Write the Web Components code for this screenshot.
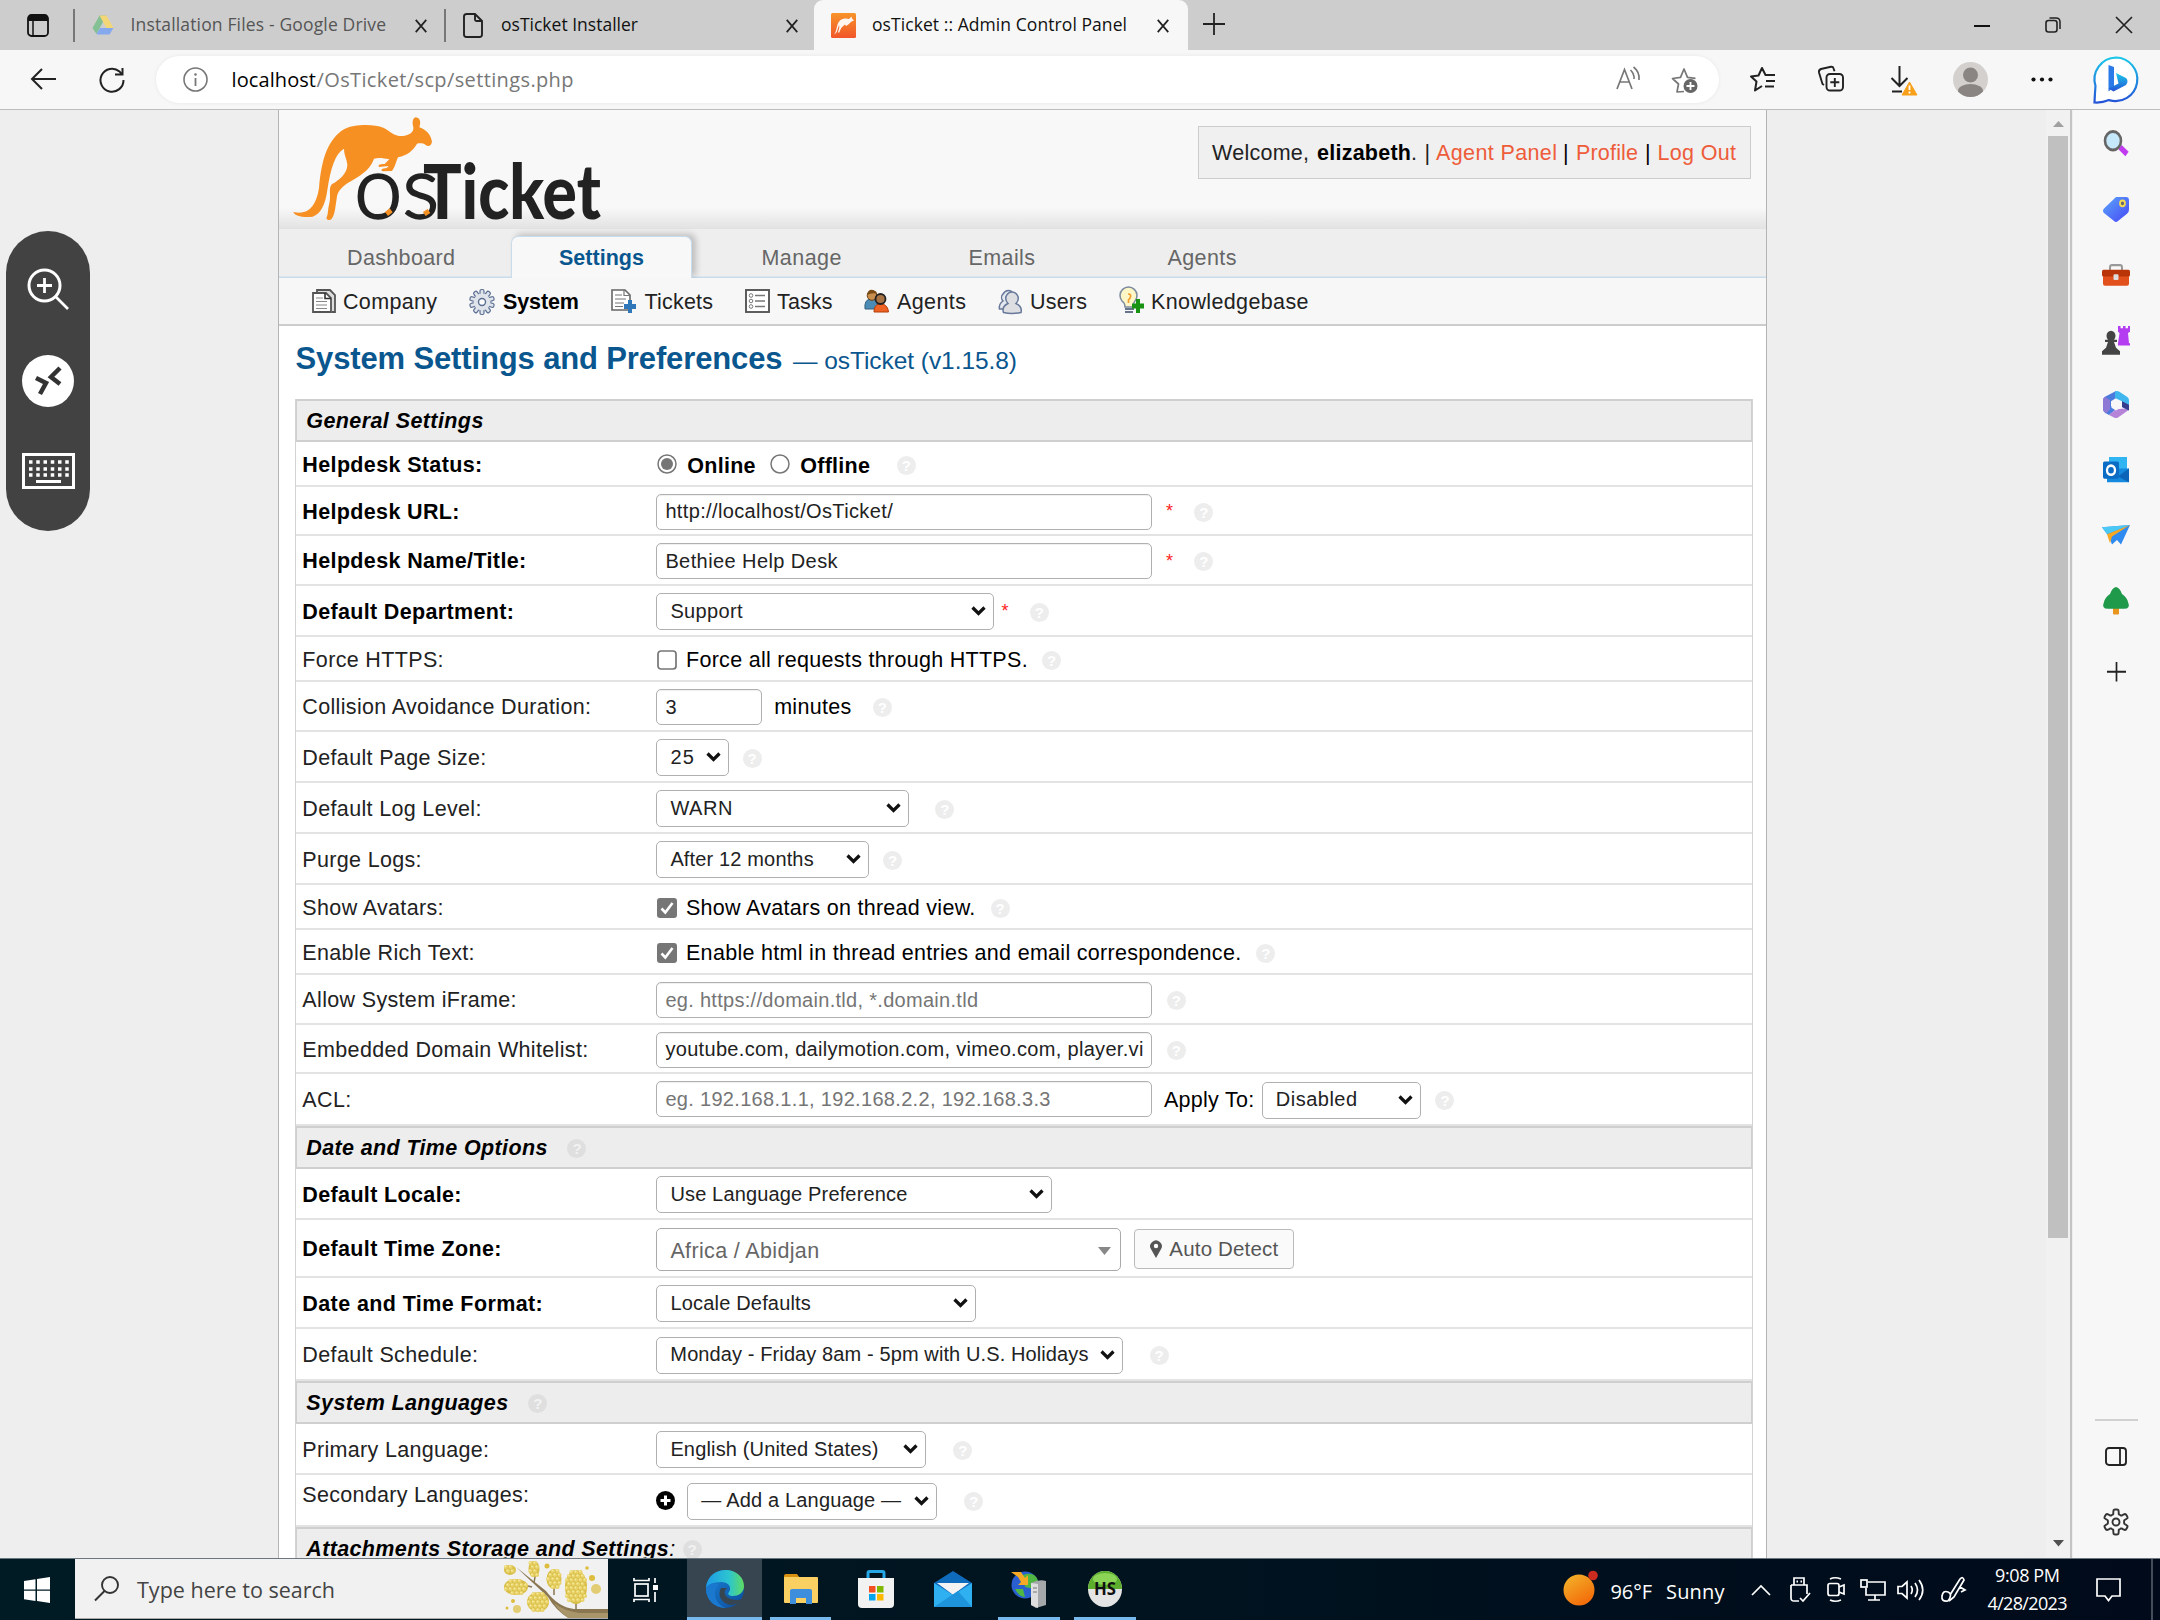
<!DOCTYPE html>
<html lang="en"><head><meta charset="utf-8"><title>osTicket :: Admin Control Panel</title>
<style>html,body{margin:0;padding:0;width:2160px;height:1620px;overflow:hidden;background:#eee}</style></head>
<body><desktop-screen></desktop-screen>
<script>
// Table geometry is written in design units; U converts them to CSS pixels.
const U = 1.37755;

// Builds a horizontal run of flex items; each entry is [start, end, html, dy].
const flow = (start, items, s = 1) => {
  let p = start;
  return items.map(([a, b, html, dy = 0]) => {
    const m = a * s - p, w = (b - a) * s; p = b * s;
    return `<div style="flex:none;display:flex;justify-content:center;margin-left:${m.toFixed(2)}px;width:${w.toFixed(2)}px;${dy ? `margin-top:${dy * 2}px` : ''}">${html}</div>`;
  }).join('');
};
const T = (w, text, style = '') => `<fit-text w="${w.toFixed(2)}" style="${style}">${text}</fit-text>`;
// Text item for flow()
const tx = (a, b, text, style = '', dy = 0, s = 1) => [a, b, T((b - a) * s, text, style), dy];
const svg = (w, h, vb, body, extra = '') => `<svg width="${w}" height="${h}" viewBox="${vb}" fill="none" style="display:block;flex:none;overflow:visible" ${extra}>${body}</svg>`;
const ico = (cx, w, h, body, dy = 0, vb) => [cx - w / 2, cx + w / 2, svg(w, h, vb || `0 0 ${w} ${h}`, body), dy];

const make = (name, css, html) => customElements.define(name, class extends HTMLElement {
  constructor() { super(); this.attachShadow({ mode: 'open' }); }
  connectedCallback() {
    this.shadowRoot.innerHTML = `<style>*{box-sizing:border-box}:host{display:flex;box-sizing:border-box;align-items:center}${css}</style>` + (typeof html === 'function' ? html(this) : html);
  }
});

make('desktop-screen', `:host{flex-direction:column;align-items:stretch;width:2160px;height:1620px;font-family:"Liberation Sans",Arial,sans-serif;color:#000;position:relative}
 .mid{display:flex;height:1448px;flex:none}
 remote-bar{position:absolute;left:6px;top:231px}`,
 `<tab-strip></tab-strip><tool-bar></tool-bar><div class="mid"><page-view></page-view><edge-sidebar></edge-sidebar></div><task-bar></task-bar><remote-bar></remote-bar>`);

const X = '<path d="M1 1L13 15M13 1L1 15" stroke="#222" stroke-width="2"/>';
make('tab-strip', `:host{height:50px;background:#cdcdcd;font-family:"Open Sans",sans-serif;font-size:17.5px;color:#111}
 .d{width:1.5px;height:33px;background:#777}
 .tab{flex:none;margin-left:20px;width:374px;height:50px;background:#f7f7f7;border-radius:9px 9px 0 0;display:flex;align-items:center}
 .rest{display:flex;align-items:center}`,
 flow(0, [
  ico(37.5, 22, 23, '<rect x="1" y="1" width="20" height="21" rx="3.5" stroke="#111" stroke-width="1.8"/><path d="M1 7V4q0-3 3-3h14q3 0 3 3v3z" fill="#111"/><path d="M6 7v15" stroke="#111" stroke-width="1.5"/>'),
  [73, 74.5, '<div class="d"></div>'],
  ico(102.5, 22, 20, '<path d="M7.5 0.5h7L11 7 4.5 19 0.5 13z" fill="#83c093"/><path d="M7.5 0.5h7L21.5 13h-7z" fill="#f3d675"/><path d="M4.5 19l3.5-6h13.5l-4 6.5h-12z" fill="#86a9ee"/>'),
  tx(130.500, 386, 'Installation Files - Google Drive', 'color:#555', -1),
  ico(421, 14, 14, X, 1, '0 0 14 16'),
  [444, 445.5, '<div class="d"></div>'],
  ico(473, 20, 25, '<path d="M3 1h9l7 7v13.500q0 2.500-2.500 2.500H3.500q-2.500 0-2.500-2.500V3.500Q1 1 3.500 1zM12 1v5.500q0 1.500 1.500 1.500H19" stroke="#222" stroke-width="1.9"/>'),
  tx(501, 638, 'osTicket Installer', '', -1),
  ico(792, 14, 14, X, 1, '0 0 14 16')]) +
 `<div class="tab" style="margin-left:15px">` + flow(814, [
  ico(843.5, 25, 25, '<defs><linearGradient id="f" x2="0" y2="1"><stop stop-color="#f79429"/><stop offset="1" stop-color="#f1562a"/></linearGradient></defs><rect width="25" height="25" rx="1.500" fill="url(#f)"/><path d="M3 21.500C6 19 5 11 9 7.500c3-2.500 7-2 9-1.500l2.500-2.500.5 2 2 2-2.500 1c-2 1.500-3 3.500-5.500 4.500l-1-1.500c-2 2-4 3-4.500 5l-1.500 3.500-1-1c1.500-4 1.500-5 1-7-1.500 4-1.500 8-5 9.500z" fill="#fff" fill-opacity=".93"/>'),
  tx(872, 1127, 'osTicket :: Admin Control Panel', '', -1),
  ico(1163, 14, 14, X, 1, '0 0 14 16')]) + '</div>' +
 `<div class="rest">` + flow(1188, [
  ico(1214, 22, 22, '<path d="M11 0v22M0 11h22" stroke="#222" stroke-width="1.8"/>', -1),
  ico(1981.500, 16, 4, '<path d="M0 2h16" stroke="#111" stroke-width="2"/>', 1),
  ico(2052.500, 16, 16, '<rect x="1" y="3.500" width="11" height="11.500" rx="2.500" stroke="#222" stroke-width="1.6"/><path d="M4.500 1H11q4 0 4 4v7" stroke="#222" stroke-width="1.5"/>'),
  ico(2124, 16, 16, '<path d="M0 0L16 16M16 0L0 16" stroke="#222" stroke-width="1.7"/>')]) + '</div>');

const person = '<clipPath id="pc"><circle cx="17.500" cy="17.500" r="17.500"/></clipPath><g clip-path="url(#pc)"><rect width="35" height="35" fill="#d3d0cd"/><circle cx="17.500" cy="13" r="7.500" fill="#8a8582"/><ellipse cx="17.500" cy="29" rx="12.500" ry="7" fill="#8a8582"/></g>';
make('tool-bar', `:host{height:60px;background:#f7f7f7;border-bottom:1.5px solid #bdbdbd;font-family:"Open Sans",sans-serif;font-size:20px}
 .pill{flex:none;width:1563px;height:47px;border-radius:24px;background:#fff;margin-left:29px;display:flex;align-items:center;box-shadow:0 0 4px #0001}`,
 flow(0, [
  ico(43, 25, 22, '<path d="M1 11h24M11 1L1 11l10 10" stroke="#222" stroke-width="2"/>', -1),
  ico(112, 26, 26, '<path d="M24.500 13A11.500 11.500 0 1 1 20.500 4.500l2 2.500M23.500 1v6.500H16" stroke="#222" stroke-width="2"/>')]) +
 `<div class="pill" style="margin-left:31px">` + flow(156, [
  ico(195.500, 25, 25, '<circle cx="12.500" cy="12.500" r="11.500" stroke="#777" stroke-width="1.600"/><path d="M12.500 11v8" stroke="#777" stroke-width="1.800"/><circle cx="12.500" cy="7.500" r="1.300" fill="#777"/>'),
  tx(231.500, 316, 'localhost'),
  tx(316.500, 573.500, '/OsTicket/scp/settings.php', 'color:#777'),
  ico(1628, 24, 22, '<path d="M1 22L8.500 2.500 16 22M4 15h9" stroke="#777" stroke-width="1.700"/><path d="M14.500 3q4 4 3.500 9M17.500 0q6.500 5 5.500 13" stroke="#777" stroke-width="1.600"/>', -1.500),
  ico(1684, 26, 26, '<path d="M13 24.500l-7 .5 1.500-8-6-5.500 8-1.200L13 2l3.500 8.300 8 1" stroke="#777" stroke-width="1.700" stroke-linejoin="round"/><circle cx="19.500" cy="19" r="7" fill="#666"/><path d="M19.500 15v8M15.500 19h8" stroke="#fff" stroke-width="1.800"/>')]) + '</div>' +
 flow(1719, [
  ico(1763, 26, 26, '<path d="M12 20l-7 4.500 1.500-9L1 10.500l7.500-1L12 2l3.500 7H25M16 15h9M15 20.500h9" stroke="#222" stroke-width="2" stroke-linejoin="round"/>', -1),
  ico(1831, 26, 26, '<rect x="8.500" y="8" width="16.500" height="16.500" rx="3.500" stroke="#222" stroke-width="1.900"/><path d="M16.800 12v9M12.300 16.300h9M6 19l-1.500-1L1 6.500q-.5-2.500 2-3.500L13 .8q2-.3 2.500 1.500l1 3" stroke="#222" stroke-width="1.900"/>', -1),
  ico(1902.500, 28, 30, '<path d="M10.500 0v19M2.500 12l8 8 8-8M3 25.500h10" stroke="#222" stroke-width="2"/><path d="M20.500 16l7.500 13H13z" fill="#f9a01b" stroke="#f9a01b" stroke-width="1"/><path d="M20.500 19.500v4.500M20.500 25.500v2" stroke="#fff" stroke-width="1.800"/>', 1),
  ico(1970.500, 35, 35, person, -.5),
  ico(2042, 22, 5, '<circle cx="2.500" cy="2.500" r="2.100" fill="#111"/><circle cx="11" cy="2.500" r="2.100" fill="#111"/><circle cx="19.500" cy="2.500" r="2.100" fill="#111"/>'),
  ico(2116, 46, 48, '<defs><linearGradient id="b" x2="0" y2="1"><stop stop-color="#1cc8e8"/><stop offset="1" stop-color="#2553d8"/></linearGradient></defs><path d="M23 1.500a21.800 21.800 0 1 1-7 42.600Q9 47 1.500 46.500 2 36 2.500 30A22 22 0 0 1 23 1.500z" fill="#fff" stroke="url(#b)" stroke-width="2.200"/><path d="M15.500 9l5.500 2v20l-5.500 4.500z" fill="#2a7be8"/><path d="M23 17l10 5q3 3 0 7l-12.500 6.500-5-3 10-5z" fill="url(#b)"/>')]));

// --- osTicket page ---
const logo = svg(311.3, 105.3, '66 34 934 316', `
 <path d="M70 322C112 332 138 308 147 250C154 160 176 102 222 74C252 58 312 58 340 69C362 80 372 96 400 94C420 91 432 82 430 68C425 50 430 38 438 38C450 40 454 52 448 68C470 76 484 92 486 112C484 122 476 128 467 121C458 114 448 116 441 117C431 136 412 152 384 158C378 170 376 186 366 199L338 200C330 196 336 191 350 190L356 184L328 187C322 182 328 178 344 178L358 164C340 160 324 158 312 162C298 200 268 214 232 236C212 250 202 262 200 282C196 304 196 328 184 344C178 348 170 346 169 340C176 326 172 318 178 296C184 272 174 250 186 238C206 228 232 206 232 180C230 160 222 152 222 132C196 146 182 190 172 256C166 300 152 328 128 336C100 340 74 334 70 322Z" fill="#f79023"/>
 <g fill="#222" font-family="Lato"><text x="253" y="341" font-weight="300" font-size="262" stroke="#222" stroke-width="7" textLength="254" lengthAdjust="spacingAndGlyphs">os</text>
 <text x="459" y="342" font-weight="900" font-size="228" textLength="534" lengthAdjust="spacingAndGlyphs">Ticket</text></g>
 <path d="M345 322l14-11 9 12-14 11zM459 322l14-9 8 12-14 9z" fill="#f79023"/>`);

const doc = (x = 0) => `<path d="M${x + 1} 4h13l5 5v14H${x + 1}z" fill="#fff" stroke="#555" stroke-width="1.800"/><path d="M${x + 13} 4v5.500h6" stroke="#333" stroke-width="1.600"/><path d="M${x + 4} 9h7M${x + 4} 12.500h11M${x + 4} 16h11M${x + 4} 19.500h11" stroke="#888" stroke-width="1.200"/>`;
let gearTeeth = ''; for (let i = 0; i < 10; i++) gearTeeth += `<rect x="11" y="0.500" width="4" height="6" rx="1.500" fill="#dfe3ea" stroke="#5b6f93" stroke-width="1.200" transform="rotate(${i * 36} 13 13)"/>`;
const subIcons = {
 company: '<path d="M5 3V1h13l5 5v17h-3" fill="#ddd" stroke="#555" stroke-width="1.800"/>' + doc(),
 gear: gearTeeth + '<circle cx="13" cy="13" r="8.500" fill="#dfe3ea"/><circle cx="13" cy="13" r="3.500" fill="#fff" stroke="#5b6f93" stroke-width="1.400"/>',
 tickets: '<path d="M1 1h13l5 5v15H1z" fill="#fff" stroke="#666" stroke-width="1.600"/><path d="M13 1v5.500h6M4 6h7M4 10h11M4 14h9M4 17.500h8" stroke="#777" stroke-width="1.200"/><path d="M17 11h4v4h4v5h-4v4h-4v-4h-4v-5h4z" fill="#2f77b8"/>',
 tasks: '<rect x="1" y="1" width="23" height="22" fill="#fff" stroke="#555" stroke-width="1.900"/><circle cx="6" cy="6.500" r="1.800" stroke="#777"/><circle cx="6" cy="12" r="1.800" stroke="#777"/><circle cx="6" cy="17.500" r="1.800" stroke="#777"/><path d="M10 6.500h10M10 12h10M10 17.500h10" stroke="#777" stroke-width="1.500"/>',
 agents: '<path d="M1 20q-1-9 5-10h4q4 1 5 5l-3 5z" fill="#4a8cb5" stroke="#34607e"/><circle cx="8" cy="6.500" r="4.800" fill="#c98f4e" stroke="#6b3e12"/><path d="M3 6q1-6 6-5 4 1 4 4-4-2-10 1z" fill="#7a4a17"/><path d="M10 23q0-7 5-8h4q5 2 5.500 8z" fill="#ee6223" stroke="#b33c0b"/><circle cx="16.500" cy="10" r="5" fill="#a87345" stroke="#222" stroke-width="1.800"/>',
 users: '<path d="M7 20H1.500q-1-5 3.500-8a5 5 0 0 1 0-7q3-5 8-3l4 6z" fill="#e4e8ef" stroke="#67789a" stroke-width="1.500"/><path d="M5.500 23.500q-2-6 4.500-9-3-3-2-7 2-4.500 6-4.500t6 4.500q1 4-2 7 6.500 3 5 9-9 2-17.500 0z" fill="#dcdee2" stroke="#67789a" stroke-width="1.500"/>',
 kb: '<path d="M6 18Q6 14 3 12A8.500 8.500 0 1 1 16 12q-2 2-2 6z" fill="#fdf6c6" stroke="#7c8a9e" stroke-width="1.500"/><path d="M9 5q4 0 2 4l-1.500 2v3" stroke="#f0a030" stroke-width="1.700"/><path d="M6 20h9M6 23h8" stroke="#66758a" stroke-width="2"/><path d="M17 10h4v4.500h4v5h-4V24h-4v-4.500h-4v-5h4z" fill="#199314"/>' };
const si = (cx, k) => ico(cx, 25, 25, subIcons[k], .5);
const su = (a, b, s, style) => tx(a, b, s, style, 1);

make('page-view', `:host{width:2072.5px;height:1448px;background:#eee;align-items:stretch;justify-content:flex-start;overflow:hidden;font-size:21.5px}
 .page{margin-left:278px;width:1489px;flex:none;background:#fff;border:solid #b4b4b4;border-width:0 1px;display:flex;flex-direction:column}
 .hd{height:119px;flex:none;background:linear-gradient(#f8f8f8 82%,#e2e2e2);display:flex;align-items:flex-start}
 .wel{margin:16px 0 0 594px;width:553px;height:53px;border:1.5px solid #ccc;background:#f0f0f0;display:flex;align-items:center}
 .nav{height:49px;flex:none;display:flex;align-items:center;color:#666;background:#eee;box-shadow:inset 0 -1.5px #c8dcec}
 .act{width:181px;height:42px;align-self:flex-end;flex:none;background:#f8f8f8;border:1.5px solid #c8dcec;border-bottom:0;border-radius:7px 7px 0 0;box-shadow:4px -2px 6px #0003;clip-path:inset(-10px -12px 0 -4px);display:flex;align-items:center}
 .sub{height:48px;flex:none;background:#f7f7f7;border-bottom:2px solid #ccc;display:flex;align-items:center;color:#222}
 .title{height:73px;flex:none;display:flex;align-items:center;color:#0a568e}
 .ct{margin:0 0 0 16px}`,
 `<div class="page"><div class="hd"><div style="margin:6px 0 0 13px;width:312px">${logo}</div><div class="wel">` +
 flow(1199, [tx(1212, 1309, 'Welcome,', 'color:#222', .5), tx(1317, 1411, 'elizabeth', 'font-weight:bold', .5), tx(1411, 1430, '. |', 'color:#222', .5), tx(1436, 1557, 'Agent Panel', 'color:#ee5c3a', .5), tx(1563, 1569, '|', '', .5), tx(1576, 1638, 'Profile', 'color:#ee5c3a', .5), tx(1645, 1651, '|', '', .5), tx(1657.500, 1736, 'Log Out', 'color:#ee5c3a', .5)]) +
 `</div></div><div class="nav">` + flow(279, [tx(347, 455, 'Dashboard', '', 4.500)]) +
 `<div class="act" style="margin-left:56px">` + flow(512, [tx(559, 644, 'Settings', 'font-weight:bold;color:#0a568e', .5)]) + '</div>' +
 flow(692, [tx(761.500, 841.500, 'Manage', '', 4.500), tx(968.500, 1035, 'Emails', '', 4.500), tx(1167.500, 1236.500, 'Agents', '', 4.500)]) +
 `</div><div class="sub">` + flow(279, [
  si(324.500, 'company'), su(343, 437, 'Company'), si(481, 'gear'), su(503, 579, 'System', 'font-weight:bold;color:#000'), si(623.500, 'tickets'), su(644.500, 713, 'Tickets'),
  si(757, 'tasks'), su(777, 832.500, 'Tasks'), si(876.500, 'agents'), su(897, 966, 'Agents'), si(1010, 'users'), su(1030, 1087, 'Users'), si(1131, 'kb'), su(1151, 1308.500, 'Knowledgebase')]) +
 `</div><div class="title">` + flow(279.500, [tx(296, 783, 'System Settings and Preferences', 'font-weight:bold;font-size:31px', -3.500), tx(793.500, 1017.500, '— osTicket (v1.15.8)', 'font-size:24.500px', -2)]) +
 `</div><settings-table class="ct"></settings-table></div><scroll-bar></scroll-bar>`);

make('scroll-bar', `:host{flex-direction:column;width:26px;height:1448px;margin-left:279px;background:#f1f1f1;border-right:2px solid #c4c4c4;flex:none;padding:10px 0 0}
 .th{width:20px;height:1102px;background:#c0c0c0;margin:9px 0 302px;flex:none}`,
 svg(11, 7, '0 0 11 7', '<path d="M0 7L5.500 1 11 7z" fill="#a0a0a0"/>') + '<div class="th"></div>' + svg(11, 7, '0 0 11 7', '<path d="M0 0h11L5.500 6.500z" fill="#505050"/>'));

make('help-tip', `:host{width:19px;height:19px;border-radius:50%;background:var(--tip,#ededed);color:var(--mark,#fff);justify-content:center;font-weight:bold;font-size:15px;font-style:normal;line-height:19px}`, '?');
make('text-box', `:host{width:100%;height:36px;background:#fff;border:1.5px solid #b0b0b0;border-radius:5px;padding:0 0 0 8px;font-size:20px;color:#222;box-shadow:inset 0 1px 1px #0001}`, '<slot></slot>');
make('select-box', `:host{width:100%;height:37px;background:#fff;border:1.5px solid #b0b0b0;border-radius:5px;padding:0 7px 1px 13px;font-size:20px;color:#222;justify-content:space-between}`, '<slot></slot>' + svg(15, 10, '0 0 15 10', '<path d="M1.500 1.500l6 6 6-6" stroke="#111" stroke-width="3.200"/>', ''));
make('choice-box', `:host{width:20px;height:20px;justify-content:center}`, e => {
  const k = e.getAttribute('kind');
  return svg(20, 20, '0 0 20 20', k === 'on' ? '<circle cx="10" cy="10" r="9" stroke="#767676" stroke-width="1.500" fill="#fff"/><circle cx="10" cy="10" r="6" fill="#767676"/>'
   : k === 'off' ? '<circle cx="10" cy="10" r="9" stroke="#767676" stroke-width="1.500" fill="#fff"/>'
   : k === 'empty' ? '<rect x="1" y="1" width="18" height="18" rx="3" stroke="#767676" stroke-width="1.700" fill="#fff"/>'
   : '<rect width="20" height="20" rx="3" fill="#767676"/><path d="M4.500 10.500l3.800 4L15.500 5" stroke="#fff" stroke-width="2.600"/>');
});

const h = (c, dy = .5) => [c - 7, c + 7, '<help-tip></help-tip>', dy];
const inp = (a, b, tb, text, ph) => [a, b, `<text-box>${T((tb - 483) * U, text, ph ? 'color:#757575' : '')}</text-box>`];
const sel = (a, b, ta, tb, text) => [a, b, `<select-box>${T((tb - ta) * U, text)}</select-box>`];
const t = (a, b, s, style, dy = 0) => tx(a, b, s, style, dy + .5, U);
const star = c => [c - 3, c + 3, T(7, '*', 'color:#f22;font-size:18px'), 0];
const ch = (c, k, dy = .5) => [c - 7.25, c + 7.25, `<choice-box kind="${k}"></choice-box>`, dy];
// [height, label, bold, label end, cell items]
const rows = [
 [45, 'Helpdesk Status:', 1, 350, [ch(484, 'on', -1), t(499, 548.500, 'Online', 'font-weight:bold', 1), ch(566.500, 'off', -1), t(581, 631.500, 'Offline', 'font-weight:bold', 1), h(658)]],
 [49, 'Helpdesk URL:', 1, 333.500, [inp(476.500, 836.500, 648, 'http://localhost/OsTicket/'), star(849), h(874)]],
 [50, 'Helpdesk Name/Title:', 1, 382, [inp(476.500, 836.500, 608, 'Bethiee Help Desk'), star(849), h(874)]],
 [51, 'Default Department:', 1, 373, [sel(476.500, 721.500, 486, 538.500, 'Support'), star(729.500), h(754.500)]],
 [45, 'Force HTTPS:', 0, 322, [ch(484, 'empty'), t(498, 746, 'Force all requests through HTTPS.'), h(763.500)]],
 [50, 'Collision Avoidance Duration:', 0, 429, [inp(476.500, 553, 492, '3'), t(562, 618, 'minutes'), h(640.500)]],
 [51, 'Default Page Size:', 0, 353, [sel(476.500, 529, 486, 503, '25'), h(546)]],
 [51, 'Default Log Level:', 0, 349.500, [sel(476.500, 660, 486, 531, 'WARN'), h(686)]],
 [51, 'Purge Logs:', 0, 306, [sel(476.500, 630.500, 486, 590, 'After 12 months'), h(648)]],
 [45, 'Show Avatars:', 0, 322, [ch(484, 'check'), t(498, 708, 'Show Avatars on thread view.'), h(726)]],
 [45, 'Enable Rich Text:', 0, 344.500, [ch(484, 'check'), t(498, 901, 'Enable html in thread entries and email correspondence.'), h(919)]],
 [50, 'Allow System iFrame:', 0, 375, [inp(476.500, 836.500, 710, 'eg. https://domain.tld, *.domain.tld', 1), h(854)]],
 [49, 'Embedded Domain Whitelist:', 0, 427, [inp(476.500, 836.500, 830, 'youtube.com, dailymotion.com, vimeo.com, player.vi'), h(854)]],
 [52, 'ACL:', 0, 255, [[...inp(476.500, 836.500, 762.500, 'eg. 192.168.1.1, 192.168.2.2, 192.168.3.3', 1), -1], t(845, 910.500, 'Apply To:'), sel(916, 1031.500, 925, 984, 'Disabled'), h(1049)]],
 ['Date and Time Options', 397, 43, 418.500],
 [51, 'Default Locale:', 1, 335, [sel(476.500, 763.500, 486, 658, 'Use Language Preference')]],
 [58, 'Default Time Zone:', 1, 364, [[476.500, 814, `<zone-picker>${T(108 * U, 'Africa / Abidjan')}</zone-picker>`], [823.500, 939.500, `<detect-button>${T(79 * U, 'Auto Detect')}</detect-button>`, -.5]]],
 [51, 'Date and Time Format:', 1, 394, [sel(476.500, 708.500, 486, 588, 'Locale Defaults')]],
 [52, 'Default Schedule:', 0, 347, [sel(476.500, 815.500, 486, 789.500, 'Monday - Friday 8am - 5pm with U.S. Holidays'), h(841.500)]],
 ['System Languages', 368.500, 43, 390],
 [51, 'Primary Language:', 0, 355, [sel(476.500, 672.500, 486, 637, 'English (United States)'), h(699)]],
 [52, 'Secondary Languages:', 0, 384, [[476.500, 490, svg(19, 19, '0 0 19 19', '<circle cx="9.500" cy="9.500" r="9.500" fill="#000"/><path d="M9.500 4.500v10M4.500 9.500h10" stroke="#fff" stroke-width="3"/>'), -.5], sel(499, 680.500, 509, 654, '— Add a Language —'), h(707)], -6],
];
make('zone-picker', `:host{width:100%;height:43px;border:1.5px solid #aaa;border-radius:5px;padding:4px 9px 0 13px;color:#666;justify-content:space-between}`, '<slot></slot>' + svg(13, 8, '0 0 13 8', '<path d="M0 0h13L6.500 8z" fill="#888"/>'));
make('detect-button', `:host{width:100%;height:40px;border:1.5px solid #bbb;border-radius:4px;background:#fafafa;padding:0 0 0 15px;color:#555;gap:7px;font-size:20.5px}`, svg(12, 18, '0 0 12 18', '<path d="M6 18L1.200 9.500A5.800 5.800 0 1 1 10.800 9.500z" fill="#555"/><circle cx="6" cy="6" r="2.200" fill="#fff"/>') + '<slot></slot>');
make('section-head', `:host{width:100%;flex:none;background:#ededed;border:2px solid #cfcfcf;padding-top:1px;border-left-width:1px;border-right-width:1px;font-weight:bold;font-style:italic;--tip:#dfdfdf;--mark:#f2f2f2}`, '<slot></slot>');
make('setting-row', `:host{width:100%;flex:none;border-bottom:2px solid #e3e3e3;padding-top:2px}`, '<slot></slot>');
const head = (s, end, hh, tip, tail = '', dy = 0) => `<section-head style="height:${hh}px">${flow(296.500, [t(222, end, s, '', dy)].concat(tail ? [t(end + .5, end + 3.500, tail, 'font-weight:normal', dy)] : [], tip ? [h(tip, dy)] : []), U)}</section-head>`;
make('settings-table', `:host{flex-direction:column;width:1458px;height:1200px;border-left:1.5px solid #d4d4d4;border-right:1.5px solid #d4d4d4;flex:none}`,
 head('General Settings', 350.500, 43) + rows.map(r => typeof r[0] === 'string' ? head(r[0], r[1], r[2], r[3]) :
 `<setting-row style="height:${r[0]}px">${flow(296, [t(219.500, r[3], r[1], (r[2] ? 'font-weight:bold' : 'color:#222'), r[5] || 0), ...r[4]], U)}</setting-row>`).join('') +
 head('Attachments Storage and Settings', 485, 43, 502, ':'));

// --- Edge sidebar: icons are stacked by their centre lines ---
const S = (w, hh, body, gap) => `<div style="flex:none;margin-top:${gap}px">${svg(w, hh, `0 0 ${w} ${hh}`, body)}</div>`;
const stack = (top, items) => {
  let p = top;
  return items.map(([c, w, hh, body, k = 1.148]) => {
    const H = hh * k, m = c - H / 2 - p; p = c + H / 2;
    return `<div style="flex:none;margin-top:${m.toFixed(2)}px">${svg(w, H.toFixed(2), `0 0 ${w} ${hh}`, body, 'preserveAspectRatio="none"')}</div>`;
  }).join('');
};
const cog = (() => { let d = ''; for (let i = 0; i < 96; i++) { const a = i / 96 * Math.PI * 2, r = 10.3 + 2.2 * Math.tanh(3 * Math.cos(6 * a)); d += (i ? 'L' : 'M') + (13 + r * Math.sin(a)).toFixed(1) + ' ' + (13 - r * Math.cos(a)).toFixed(1); } return `<path d="${d}Z" stroke="#333" stroke-width="1.900" stroke-linejoin="round"/><circle cx="13" cy="13" r="3.500" stroke="#333" stroke-width="1.900"/>`; })();
make('edge-sidebar', `:host{width:87.5px;height:1448px;background:#f7f7f7;flex-direction:column;justify-content:flex-start}`,
 stack(110, [
 [143.500, 26, 22, '<path d="M17 14l7 6" stroke="#c13cf0" stroke-width="5"/><circle cx="10" cy="8.500" r="8" fill="#c5e9fb" stroke="#666" stroke-width="2.600"/>'],
 [209.500, 26, 22, '<defs><linearGradient id="tg" x2="1" y2="1"><stop stop-color="#5ba7fb"/><stop offset="1" stop-color="#4747f5"/></linearGradient></defs><path d="M13 0h10q3 0 3 3v8q0 2-2 3.500L15 21q-2 1.500-4 0L1 14q-2-2 0-4z" fill="url(#tg)"/><circle cx="19.500" cy="5.500" r="2.500" stroke="#f6dc50" stroke-width="1.800" fill="#667"/>'],
 [275, 28, 19, '<path d="M8 6V3q0-2 2-2h8q2 0 2 2v3" stroke="#999" stroke-width="2"/><rect x="1" y="9" width="26" height="10" rx="2" fill="#e2511c"/><rect y="5" width="28" height="6" rx="1.500" fill="#b93508"/><rect x="11.500" y="9" width="5" height="5" rx="1" fill="#ddd"/>'],
 [340, 28, 25, '<path d="M16 0h2.500v2H21V0h2.500v2H26V0h2v5l-2 1 1 9h1v2H16v-2l1.500-9-1.500-1z" fill="#b43df2"/><path d="M0 25v-3l4-3 2-5H3v-2h3a4.500 4.500 0 1 1 6 0h3v2h-3l2 5 4 3v3z" fill="#444"/>'],
 [405, 26, 24, '<path d="M13 0L2 5Q0 6 0 8v8q0 2 2 3l4 2 7-5-5-3V9l7-4z" fill="#4b7bdc"/><path d="M0 8q0-2 2-3l5 3v8l-4 3.500q-3-1.500-3-3.500z" fill="#8d78d6"/><path d="M6 21l7-5 12-1v2L15 23q-2 1-4 0z" fill="#b583d8"/><path d="M12 .5q2-1 4 0l8 4.500q2 1 2 3v9l-7-3V9l-7-3z" fill="#3fb7ee"/><path d="M19 9l7 3v5l-7-3z" fill="#383c8c"/><path d="M13 7.500l4.500 2.500v4.500L13 17l-4.500-2.500V10z" fill="#f7f7f7"/>'],
 [470, 26, 22, '<path d="M6 0h18v12H6z" fill="#31b4f2"/><path d="M4 10h22v12H4z" fill="#1489dd"/><path d="M26 10v12L15 17z" fill="#0c64b8"/><rect y="4" width="16" height="15" rx="1.500" fill="#0a6cc4"/><circle cx="8" cy="11.500" r="4" stroke="#fff" stroke-width="2.300"/>'],
 [535, 28, 17, '<path d="M0 2L28 0 19 17l-4-4-5 4-3-7z" fill="#2f8bf0"/><path d="M0 2L28 0 5 8z" fill="#4cc8f6"/><path d="M28 0L5 8l3 8 2-6z" fill="#f6a723"/>'],
 [600.500, 26, 24, '<rect x="10" y="16" width="6" height="8" rx="1" fill="#e8961d"/><path d="M13 0q4 1 6 6 5 3 6 7 3 6-4 6H5q-7 0-4-6 1-4 6-7 2-5 6-6z" fill="#1f9a4b"/>'],
 [671.500, 19, 17, '<path d="M9.500 0v17M0 8.500h19" stroke="#222" stroke-width="1.700"/>'],
 [1420.500, 43, 2, '<path d="M0 1h43" stroke="#c4c4c4" stroke-width="1.500"/>', 1],
 [1457, 22, 19, '<rect x="1" y="1" width="20" height="17" rx="3" stroke="#222" stroke-width="1.900"/><path d="M15 1v17" stroke="#222" stroke-width="1.800"/>', 1],
 [1522, 26, 26, cog, 1]]));

make('remote-bar', `:host{width:84px;height:300px;border-radius:42px;background:#424242;flex-direction:column}`,
 S(44, 44, '<circle cx="18.500" cy="18.500" r="15.500" stroke="#fff" stroke-width="3"/><path d="M30 30l12 12M18.500 11v15M11 18.500h15" stroke="#fff" stroke-width="2.800"/>', 36) +
 S(52, 52, '<circle cx="26" cy="26" r="26" fill="#fff"/><path d="M14 23l10 5-6 11M38 13l-9 9 9 7" stroke="#333" stroke-width="4.500"/>', 44) +
 S(53, 36, '<rect x="1.500" y="1.500" width="50" height="33" stroke="#fff" stroke-width="3"/><path d="M7 9h40M7 16h40M7 22h40" stroke="#fff" stroke-width="3.500" stroke-dasharray="3.500 3.750"/><path d="M14 28.500h25" stroke="#fff" stroke-width="3"/>', 46));

// --- Task bar ---
const dots = (cx, cy, rx, ry) => { let s = `<ellipse cx="${cx}" cy="${cy}" rx="${rx}" ry="${ry}" fill="#d9be48"/>`, j = 0; for (let y = -ry + 2; y < ry; y += 4, j++) for (let x = -rx + 2 + (j % 2) * 2; x < rx; x += 4.5) if ((x / rx) ** 2 + (y / ry) ** 2 < 1) s += `<circle cx="${cx + x}" cy="${cy + y}" r="2.100" fill="#e8d269"/><circle cx="${cx + x - .6}" cy="${cy + y - .6}" r=".9" fill="#f6eb9e"/>`; return s; };
const branch = svg(105, 60, '0 0 105 60', '<path d="M28 28l-12-3M50 36V22M30 24l2-12M72 50V40" stroke="#8a7650" stroke-width="1.500"/><path d="M12 8L42 32Q54 48 70 50L105 50v10H66Q52 52 44 38z" fill="#8a7650"/><path d="M50 44Q60 52 76 54L105 54v6H66Q56 54 50 44z" fill="#a8966a"/>' + dots(6, 11, 6, 5) + dots(30, 10, 5.5, 8) + dots(12, 28, 12, 8) + dots(50, 20, 7.5, 10) + dots(72, 28, 11, 17) + dots(34, 43, 11, 10) + '<g fill="#dcbd3e"><circle cx="43" cy="7" r="2.500"/><circle cx="83" cy="9" r="1.800"/><circle cx="88" cy="19" r="3"/><circle cx="92" cy="30" r="5" opacity=".7"/><circle cx="9" cy="42" r="2"/><circle cx="13" cy="50" r="4" opacity=".7"/><circle cx="3" cy="49" r="1.500"/></g>');
const W = 'stroke="#fff" stroke-width="1.700"';
make('task-bar', `:host{height:62px;flex:none;background:linear-gradient(90deg,#001b24,#00131f 55%,#000a1a);border-top:1px solid #6b7780;font-family:"Open Sans",sans-serif;font-size:20px;color:#fff}
 .search{height:60px;width:533px;flex:none;background:#f1f1f1;border-bottom:1.5px solid #aaa;display:flex;align-items:center;color:#444;align-self:flex-start;overflow:hidden}
 .app{height:61px;flex:none;display:flex;align-items:center;justify-content:center;border-bottom:3.5px solid transparent;padding-top:2px}
 .run{border-color:#76b9ed}.on{background:#36454f}
 .clock{display:flex;flex-direction:column;align-items:center;gap:4px;font-size:18px;line-height:24px}`,
 flow(0, [ico(37, 26, 26, '<path d="M0 4l11.500-1.800v10.300H0zM13 2L26 0v12.500H13zM0 13.800h11.500V24L0 22.200zM13 13.800h13V26l-13-2z" fill="#fff"/>')]) +
 `<div class="search" style="margin-left:25px">` + flow(75, [
  ico(106, 25, 25, '<circle cx="16" cy="9" r="8" stroke="#333" stroke-width="1.900"/><path d="M10.500 15L1 24.500" stroke="#333" stroke-width="1.900"/>'),
  tx(137, 335, 'Type here to search', 'font-size:21.500px', .5), [504, 609, branch]]) + '</div>' +
 flow(608, [ico(645.500, 25, 24, `<rect x="2" y="6" width="13" height="12" ${W}/><path d="M1 0v2.500h15V0M1 24v-2.500h15V24M22 0v5M22 14v10" ${W}/><rect x="20" y="7" width="5" height="5" fill="#fff"/>`)]) +
 [[29, 75, 'run on', svg(38, 38, '0 0 38 38', '<defs><linearGradient id="e1" x2="1" y2="0"><stop stop-color="#1d9be6"/><stop offset=".6" stop-color="#2cc4d0"/><stop offset="1" stop-color="#5fdc62"/></linearGradient><linearGradient id="e2" x2="1" y2="1"><stop stop-color="#1c86d8"/><stop offset="1" stop-color="#0b4a9b"/></linearGradient></defs><circle cx="19" cy="19" r="19" fill="url(#e2)"/><path d="M0 18C1 6 10 0 20 0s18 7 18 16c0 7-6 10-11 10-4 0-6-2-4-4 3-4 0-10-8-10C7 12 2 15 0 18z" fill="url(#e1)"/><path d="M15 18c-4 6 0 16 10 17 5 0 9-3 11-6-5 2-15 1-17-5-1-3 1-5 2-6z" fill="#36454f"/><path d="M13 15C6 20 8 34 20 38 8 38 0 29 0 18c3-5 9-6 13-3z" fill="#1b78cf"/>')],
  [8, 61, 'run', svg(34, 30, '0 0 34 30', '<path d="M0 2q0-2 2-2h11l3 4H0z" fill="#d98f10"/><rect y="3" width="34" height="26" rx="1" fill="#fbd063"/><path d="M6 17q0-2 2-2h18q2 0 2 2v13h-6v-6H12v6H6z" fill="#3d8fde"/>')],
  [14, 61, '', svg(36, 38, '0 0 36 38', '<path d="M10 10V3q0-1.500 1.500-1.500h13Q26 1.500 26 3v7" stroke="#25a6e5" stroke-width="3"/><path d="M0 8h36v26q0 4-4 4H4q-4 0-4-4z" fill="#f2f2f2"/><path d="M11 16h6.500v6.500H11z" fill="#f25022"/><path d="M19 16h6.500v6.500H19z" fill="#7fba00"/><path d="M11 24h6.500v6.500H11z" fill="#00a4ef"/><path d="M19 24h6.500v6.500H19z" fill="#ffb900"/>')],
  [16, 61, '', svg(38, 36, '0 0 38 36', '<path d="M0 12L19 0l19 12v24H0z" fill="#0f6cbd"/><path d="M0 12l19 12 19-12v24H0z" fill="#2fb0f0"/><path d="M3 12h32L20 23q-1 1-2 0z" fill="#f3f3f3"/><path d="M0 36l24-16 14 16z" fill="#1e94dc"/>')],
  [15, 62, 'run', svg(36, 37, '0 0 36 37', '<circle cx="14" cy="14" r="13.500" fill="#2a5fd0"/><path d="M12 4q12-4 15 6l-4 8-9-2zM4 18l8 0 2 8q-6 0-10-8z" fill="#4fb543"/><path d="M20 12q8-4 15-2v24l-10 3-5-3z" fill="#a5a8aa"/><path d="M20 12l7 1v24l-7-3z" fill="#dedede"/><path d="M22 17h4M22 21h4" stroke="#777"/><path d="M0 1h10l4 6 3-3v10H7l3-3L7 6z" fill="#f5a925"/>')],
  [14, 62, 'run', svg(34, 36, '0 0 34 36', '<clipPath id="hc"><ellipse cx="17" cy="18" rx="17" ry="18"/></clipPath><g clip-path="url(#hc)"><rect width="34" height="36" fill="#e4e4e4"/><rect width="34" height="18" fill="#5cae2c"/><ellipse cx="17" cy="8" rx="12" ry="6" fill="#8bd455"/></g><text x="6" y="24" font-family="Open Sans" font-weight="bold" font-size="17.500" textLength="22" lengthAdjust="spacingAndGlyphs" fill="#111">HS</text>')]
 ].map(([m, w, c, s]) => `<div class="app ${c}" style="margin-left:${m}px;width:${w}px">${s}</div>`).join('') +
 flow(1137, [
  ico(1581.500, 36, 36, '<defs><linearGradient id="sn" x2=".6" y2="1"><stop stop-color="#f3b72c"/><stop offset="1" stop-color="#f36c0a"/></linearGradient></defs><circle cx="16" cy="20" r="15.500" fill="url(#sn)"/><circle cx="30" cy="5.500" r="4.800" fill="#cc2b20"/>', -2),
  tx(1611.500, 1653, '96°F', '', 1.500), tx(1667, 1725.500, 'Sunny', '', 1.500),
  ico(1761.500, 18, 10, `<path d="M0 10L9 1l9 9" ${W}/>`),
  ico(1800.500, 20, 25, `<path d="M4 8V1h10v7M1 8h16v9M9 24H4q-3 0-3-3V8" ${W}/><path d="M10 21l3 3 7-8" ${W}/><path d="M6.500 4.500h1.500M10.500 4.500h1.500" stroke="#fff" stroke-width="2"/>`),
  ico(1837, 18, 25, `<rect x="1" y="6.500" width="11" height="12" rx="2" ${W}/><path d="M12 10l5-2v9l-5-2M3 2q5-2.500 11 0M3 23q5 2.500 11 0" ${W}/>`),
  ico(1873.500, 26, 22, `<path d="M8 3h17v13H6V9M15 16v5M8 21h12" ${W}/><rect x="1" y="1" width="6" height="7" ${W}/>`),
  ico(1911, 27, 22, `<path d="M1 7.500h4L10 3v16l-5-4.500H1zM14 7q2.500 4 0 8M18 4q5 7 0 14M22 1q7.500 10 0 20" ${W}/>`),
  ico(1955, 26, 25, `<path d="M7 24Q0 25 1 19t6-4 0 9M9 18L19 2q3-3 4 1L13 20l-5 4M19 10l5 3-4 2" ${W}/>`),
  [1988.500, 2068.500, `<div class="clock">${T(65, '9:08 PM')}${T(80, '4/28/2023')}</div>`, -1],
  ico(2109, 25, 24, `<path d="M1 1h23v17h-8l-3.500 4.500L9 18H1z" ${W}/>`),
  ico(2153, 2, 62, '<path d="M1 0v62" stroke="#5a6570" stroke-width="1.500"/>')]));

// One line of text whose tracking is tuned to fill exactly `w` pixels.
customElements.define('fit-text', class extends HTMLElement {
  constructor() { super(); this.attachShadow({ mode: 'open' }).innerHTML = '<style>:host{display:block;flex:none;white-space:pre}span{display:inline-block}</style><span><slot></slot></span>'; }
  connectedCallback() {
    const w = +this.getAttribute('w'), s = this.shadowRoot.querySelector('span'), n = this.textContent.length;
    this.style.width = w + 'px';
    if (n > 1) s.style.letterSpacing = ((w - s.getBoundingClientRect().width) / (n - 1)).toFixed(3) + 'px';
  }
});
</script></body></html>
